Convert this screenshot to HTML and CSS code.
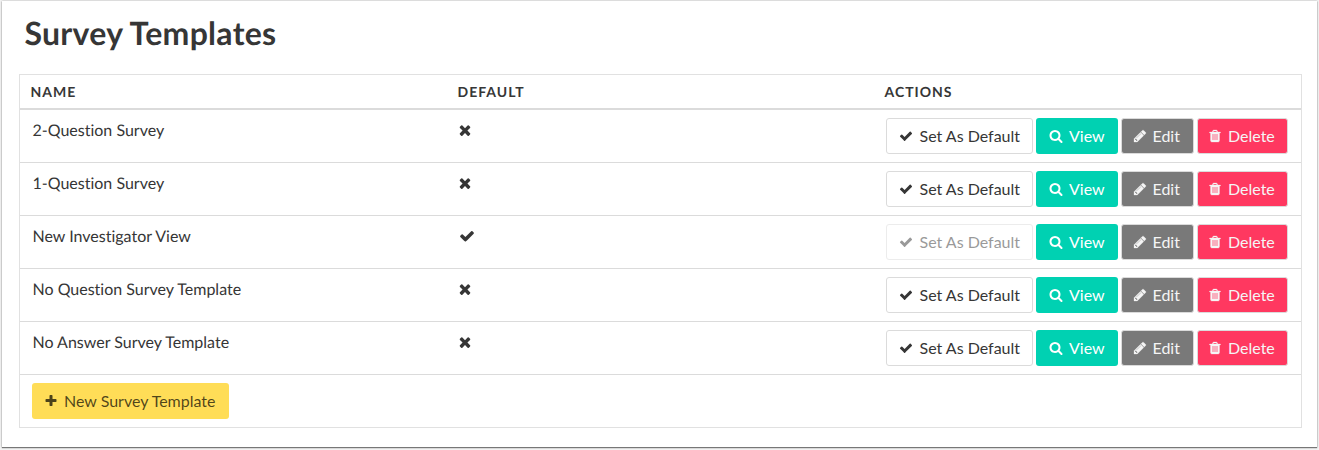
FILE: index.html
```html
<!DOCTYPE html>
<html lang="en">
<head>
<meta charset="utf-8">
<title>Survey Templates</title>
<link rel="stylesheet" href="styles.css">
</head>
<body>
<svg class="sprite" aria-hidden="true">
<symbol id="check" viewBox="0 0 1792 1792"><path d="M1671 566q0 40-28 68l-724 724-136 136q-28 28-68 28t-68-28l-136-136-362-362q-28-28-28-68t28-68l136-136q28-28 68-28t68 28l294 295 656-657q28-28 68-28t68 28l136 136q28 28 28 68z"/></symbol>
<symbol id="times" viewBox="0 0 1792 1792"><path d="M1490 1322q0 40-28 68l-136 136q-28 28-68 28t-68-28l-294-294-294 294q-28 28-68 28t-68-28l-136-136q-28-28-28-68t28-68l294-294-294-294q-28-28-28-68t28-68l136-136q28-28 68-28t68 28l294 294 294-294q28-28 68-28t68 28l136 136q28 28 28 68t-28 68l-294 294 294 294q28 28 28 68z"/></symbol>
<symbol id="search" viewBox="0 0 1792 1792"><path d="M1216 832q0-185-131.5-316.5t-316.5-131.5-316.5 131.5-131.5 316.5 131.5 316.5 316.5 131.5 316.5-131.5 131.5-316.5zm512 832q0 52-38 90t-90 38q-54 0-90-38l-343-342q-179 124-399 124-143 0-273.5-55.5t-225-150-150-225-55.5-273.5 55.5-273.5 150-225 225-150 273.5-55.5 273.5 55.5 225 150 150 225 55.5 273.5q0 220-124 399l343 343q37 37 37 90z"/></symbol>
<symbol id="plus" viewBox="0 0 1792 1792"><path d="M1600 736v192q0 40-28 68t-68 28h-416v416q0 40-28 68t-68 28h-192q-40 0-68-28t-28-68v-416h-416q-40 0-68-28t-28-68v-192q0-40 28-68t68-28h416v-416q0-40 28-68t68-28h192q40 0 68 28t28 68v416h416q40 0 68 28t28 68z"/></symbol>
<symbol id="pencil" viewBox="0 0 1792 1792"><path d="M491 1536l91-91-235-235-91 91v107h128v128h107zm523-928q0-22-22-22-10 0-17 7l-542 542q-7 7-7 17 0 22 22 22 10 0 17-7l542-542q7-7 7-17zm-54-192l416 416-832 832h-416v-416zm683 96q0 53-37 90l-166 166-416-416 166-165q36-38 90-38 53 0 91 38l235 234q37 39 37 91z"/></symbol>
<symbol id="trash" viewBox="0 0 1792 1792"><path d="M704 1376v-704q0-14-9-23t-23-9h-64q-14 0-23 9t-9 23v704q0 14 9 23t23 9h64q14 0 23-9t9-23zm256 0v-704q0-14-9-23t-23-9h-64q-14 0-23 9t-9 23v704q0 14 9 23t23 9h64q14 0 23-9t9-23zm256 0v-704q0-14-9-23t-23-9h-64q-14 0-23 9t-9 23v704q0 14 9 23t23 9h64q14 0 23-9t9-23zm-544-992h448l-48-117q-7-9-17-11h-317q-10 2-17 11zm928 32v64q0 14-9 23t-23 9h-96v948q0 83-47 143.5t-113 60.5h-832q-66 0-113-58.5t-47-141.5v-952h-96q-14 0-23-9t-9-23v-64q0-14 9-23t23-9h309l70-167q15-37 54-63t79-26h320q40 0 79 26t54 63l70 167h309q14 0 23 9t9 23z"/></symbol>
</svg>
<main class="panel">
<h1 class="title">Survey Templates</h1>
<div class="table">
<div class="row head"><span>Name</span><span>Default</span><span>Actions</span></div>
<div class="row"><span class="cell">2-Question Survey</span><span class="cell"><svg class="icon mark-x"><use href="#times"/></svg></span><div class="actions"><button class="btn set"><svg class="icon"><use href="#check"/></svg>Set As Default</button><button class="btn view"><svg class="icon"><use href="#search"/></svg>View</button><button class="btn edit"><svg class="icon"><use href="#pencil"/></svg>Edit</button><button class="btn delete"><svg class="icon"><use href="#trash"/></svg>Delete</button></div></div>
<div class="row"><span class="cell">1-Question Survey</span><span class="cell"><svg class="icon mark-x"><use href="#times"/></svg></span><div class="actions"><button class="btn set"><svg class="icon"><use href="#check"/></svg>Set As Default</button><button class="btn view"><svg class="icon"><use href="#search"/></svg>View</button><button class="btn edit"><svg class="icon"><use href="#pencil"/></svg>Edit</button><button class="btn delete"><svg class="icon"><use href="#trash"/></svg>Delete</button></div></div>
<div class="row"><span class="cell">New Investigator View</span><span class="cell"><svg class="icon mark-check"><use href="#check"/></svg></span><div class="actions"><button class="btn set" disabled><svg class="icon"><use href="#check"/></svg>Set As Default</button><button class="btn view"><svg class="icon"><use href="#search"/></svg>View</button><button class="btn edit"><svg class="icon"><use href="#pencil"/></svg>Edit</button><button class="btn delete"><svg class="icon"><use href="#trash"/></svg>Delete</button></div></div>
<div class="row"><span class="cell">No Question Survey Template</span><span class="cell"><svg class="icon mark-x"><use href="#times"/></svg></span><div class="actions"><button class="btn set"><svg class="icon"><use href="#check"/></svg>Set As Default</button><button class="btn view"><svg class="icon"><use href="#search"/></svg>View</button><button class="btn edit"><svg class="icon"><use href="#pencil"/></svg>Edit</button><button class="btn delete"><svg class="icon"><use href="#trash"/></svg>Delete</button></div></div>
<div class="row"><span class="cell">No Answer Survey Template</span><span class="cell"><svg class="icon mark-x"><use href="#times"/></svg></span><div class="actions"><button class="btn set"><svg class="icon"><use href="#check"/></svg>Set As Default</button><button class="btn view"><svg class="icon"><use href="#search"/></svg>View</button><button class="btn edit"><svg class="icon"><use href="#pencil"/></svg>Edit</button><button class="btn delete"><svg class="icon"><use href="#trash"/></svg>Delete</button></div></div>
<div class="foot"><button class="btn new"><svg class="icon"><use href="#plus"/></svg>New Survey Template</button></div>
</div>
</main>
</body>
</html>
```
FILE: styles.css
```css
* { box-sizing: border-box; }
body { margin: 0; height: 450px; overflow: hidden; background: #f3f3f3; color: #363636; font: 16px/24px Lato, sans-serif; font-variant-ligatures: none; text-rendering: geometricPrecision; }
.sprite { display: none; }
.panel { margin: 1px 2px 0; height: 446px; padding: 12px 15px 0 17px; background: #fff; box-shadow: 0 1px 1px #777, 0 0 2px #aaa; }
.title { margin: 0 0 21px 5.5px; font-size: 32px; line-height: 40px; font-weight: 700; letter-spacing: .28px; }
.table { border: 1px solid #e1e1e1; }
.row { display: grid; grid-template-columns: 427px 427px 1fr; height: 53px; border-bottom: 1px solid #dbdbdb; }
.row.head { height: 35px; border-bottom: 2px solid #dbdbdb; padding-left: 10.5px; font-size: 14px; line-height: 33px; font-weight: 700; letter-spacing: 1px; text-transform: uppercase; }
.cell { padding: 9px 12.5px; line-height: 24px; }
.icon { width: 14px; height: 14px; fill: currentColor; flex: none; }
.mark-x, .mark-check { display: block; width: 16px; height: 16px; margin: 3px 0 0 -2.5px; }
.mark-check { margin-left: -1px; }
.actions { display: flex; align-items: flex-start; padding: 8px 0 0 12px; gap: 3px; }
.btn { display: flex; align-items: center; justify-content: flex-start; gap: 6.5px; height: 36px; padding: 0 0 1px 12px; border: 1px solid transparent; border-radius: 3px; font: 16px/24px Lato, sans-serif; font-variant-ligatures: none; white-space: nowrap; }
.set { width: 147px; background: #fff; border-color: #dbdbdb; color: #363636; }
.set:disabled { opacity: .5; }
.view { width: 82px; padding-left: 11.5px; background: #00d1b2; color: #fff; }
.edit { width: 73px; padding-left: 10.5px; gap: 6px; background: #797979; border-color: #dbdbdb; color: #f5f5f5; }
.delete { width: 91px; padding-left: 10px; gap: 6px; background: #ff3860; border-color: #dbdbdb; color: #f5f5f5; }
.edit .icon, .delete .icon { stroke: currentColor; stroke-width: 35; }
.foot { height: 52px; padding: 8px 12px; }
.new { width: 197px; padding-left: 11px; gap: 6px; background: #ffdd57; color: rgba(0,0,0,.7); }
```
